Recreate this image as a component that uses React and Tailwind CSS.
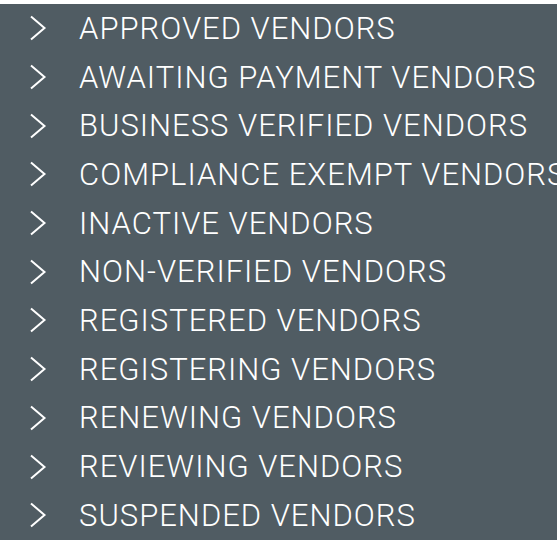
import React from 'react';

const items = [
  'APPROVED VENDORS',
  'AWAITING PAYMENT VENDORS',
  'BUSINESS VERIFIED VENDORS',
  'COMPLIANCE EXEMPT VENDORS',
  'INACTIVE VENDORS',
  'NON-VERIFIED VENDORS',
  'REGISTERED VENDORS',
  'REGISTERING VENDORS',
  'RENEWING VENDORS',
  'REVIEWING VENDORS',
  'SUSPENDED VENDORS',
];

function Chevron() {
  return (
    <svg width="18" height="26" viewBox="0 0 18 26" fill="none" className="shrink-0">
      <path d="M2 1.5 L15.5 13 L2 24.5" stroke="white" strokeWidth="2" />
    </svg>
  );
}

export default function App() {
  return (
    <div className="w-[557px] h-[540px] bg-white pt-[4px] overflow-hidden">
      <ul className="bg-[#505c63] h-full" style={{ fontFamily: 'Roboto, sans-serif' }}>
        {items.map((label) => (
          <li key={label} className="flex items-center h-[48.7px] pl-[29px] whitespace-nowrap">
            <Chevron />
            <span className="ml-[32px] text-white text-[31px] font-light tracking-[1px] leading-none">
              {label}
            </span>
          </li>
        ))}
      </ul>
    </div>
  );
}
